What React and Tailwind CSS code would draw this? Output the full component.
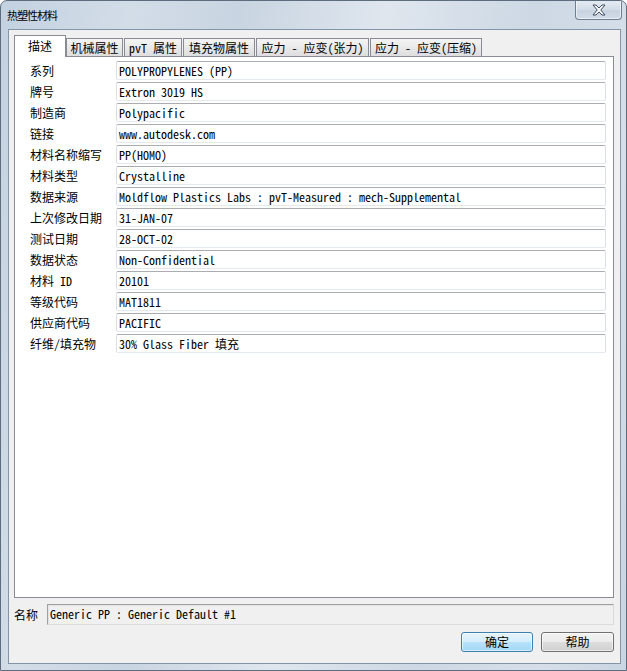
import React from "react";

const rows = [
  ["系列", "POLYPROPYLENES (PP)"],
  ["牌号", "Extron 3019 HS"],
  ["制造商", "Polypacific"],
  ["链接", "www.autodesk.com"],
  ["材料名称缩写", "PP(HOMO)"],
  ["材料类型", "Crystalline"],
  ["数据来源", "Moldflow Plastics Labs : pvT-Measured : mech-Supplemental"],
  ["上次修改日期", "31-JAN-07"],
  ["测试日期", "28-OCT-02"],
  ["数据状态", "Non-Confidential"],
  ["材料 ID", "20101"],
  ["等级代码", "MAT1811"],
  ["供应商代码", "PACIFIC"],
  ["纤维/填充物", "30% Glass Fiber 填充"],
];

const tabs = [
  { label: "机械属性", w: "w-[57px]" },
  { label: "pvT 属性", w: "w-[58px]" },
  { label: "填充物属性", w: "w-[72px]" },
  { label: "应力 - 应变(张力)", w: "w-[113px]" },
  { label: "应力 - 应变(压缩)", w: "w-[112px]" },
];

export default function App() {
  return (
    <div className="w-[627px] h-[671px] relative overflow-hidden border border-[#5d6d7e] rounded-t-[7px] bg-[linear-gradient(100deg,#c3d1e0_0%,#d3dde8_18%,#c8d4e1_32%,#dfe6ee_52%,#cdd8e4_72%,#d6dfe9_88%,#c9d5e2_100%)] font-['Noto_Sans_Mono_CJK_SC','Noto_Sans_CJK_SC','Liberation_Mono',monospace] text-[12px] text-black">
      {/* title bar */}
      <div className="h-[28px] flex items-center pl-[6px]">
        <span className="font-['Noto_Sans_CJK_SC',sans-serif] text-[11px] tracking-[-1px] leading-none pt-[1px]">
          热塑性材料
        </span>
      </div>
      {/* close button */}
      <div className="absolute top-[-1px] right-[4px] w-[47px] h-[20px] border-x border-b border-[#6f7f92] rounded-b-[4px] bg-[linear-gradient(#e6ecf3,#d3dde8_50%,#c6d2df_51%,#d2dce7)] shadow-[inset_0_0_0_1px_rgba(255,255,255,0.55)] flex items-center justify-center">
        <svg width="14" height="12" viewBox="0 0 14 12">
          <polygon
            points="1,1 4,1 7,4 10,1 13,1 8.8,6 13,11 10,11 7,8 4,11 1,11 5.2,6"
            fill="#f5f7fa"
            stroke="#3f4d5e"
            strokeWidth="1"
            strokeLinejoin="round"
          />
        </svg>
      </div>

      {/* client area */}
      <div className="ml-[7px] w-[613px] h-[635px] border border-[#8495a8] bg-[#f0f0f0] pt-[5px] pl-[5px] pr-[6px]">
        {/* tabs */}
        <div className="flex items-end h-[21px]">
          <div className="relative z-10 w-[52px] h-[22px] -mb-px bg-white border-x border-t border-[#898c95] flex items-center justify-center pb-[1px]">
            <span className="leading-none">描述</span>
          </div>
          {tabs.map((t, i) => (
            <div
              key={i}
              className={`${t.w} h-[18px] ${i > 0 ? "ml-px" : ""} border-x border-t border-[#898c95] bg-[linear-gradient(#f5f5f5,#e9e9e9_50%,#dedede)] flex items-center justify-center`}
            >
              <span className="leading-none whitespace-pre">{t.label}</span>
            </div>
          ))}
        </div>
        {/* panel */}
        <div className="w-[600px] h-[542px] border border-[#898c95] bg-white pt-[4px] pl-[15px] flex flex-col gap-[2px]">
          {rows.map(([label, value], i) => (
            <div key={i} className="flex items-center h-[19px]">
              <div className="w-[86px] leading-none whitespace-pre">{label}</div>
              <div className="w-[490px] h-[19px] rounded-[2px] border border-t-[#abadb3] border-l-[#dcdee5] border-r-[#dbdfe6] border-b-[#e3e9ef] bg-white flex items-center pl-[2px]">
                <span className="leading-none whitespace-pre">{value}</span>
              </div>
            </div>
          ))}
        </div>
        {/* name row */}
        <div className="mt-[6px] flex items-center h-[21px]">
          <div className="w-[33px] leading-none">名称</div>
          <div className="w-[567px] h-[21px] border border-t-[#a0a0a0] border-l-[#a0a0a0] border-r-[#dcdcdc] border-b-[#dcdcdc] shadow-[inset_1px_1px_0_#e3e3e3] bg-[#f0f0f0] flex items-start pt-[3px] pl-[2px]">
            <span className="leading-none whitespace-pre">Generic PP : Generic Default #1</span>
          </div>
        </div>
        {/* buttons */}
        <div className="mt-[7px] flex justify-end gap-[8px]">
          <div className="w-[72px] h-[20px] rounded-[3px] border border-[#3c7fb1] bg-[linear-gradient(#e5f4fc,#d4edfb_50%,#b8e2fa_51%,#a5d7f3)] shadow-[inset_0_0_0_1px_rgba(255,255,255,0.6)] flex items-center justify-center">
            <span className="leading-none">确定</span>
          </div>
          <div className="w-[73px] h-[20px] rounded-[3px] border border-[#707070] bg-[linear-gradient(#f2f2f2,#ebebeb_50%,#dddddd_51%,#cfcfcf)] shadow-[inset_0_0_0_1px_rgba(255,255,255,0.6)] flex items-center justify-center">
            <span className="leading-none">帮助</span>
          </div>
        </div>
      </div>
    </div>
  );
}
